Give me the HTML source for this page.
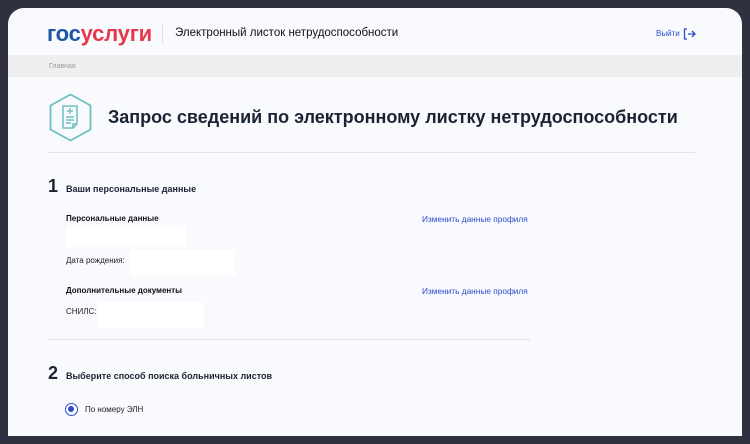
<!DOCTYPE html>
<html><head><meta charset="utf-8"><style>
*{margin:0;padding:0;box-sizing:border-box}
body{width:750px;height:444px;background:#2f3040;font-family:"Liberation Sans",sans-serif;overflow:hidden;position:relative}
.page{position:absolute;left:8px;top:8px;width:734px;height:428px;background:#f9fafd;border-radius:16px 16px 0 0;overflow:hidden}
.a{position:absolute;white-space:nowrap;line-height:1}
.w{position:absolute;background:#fff}
</style></head><body>
<div class="page">
<div class="a" style="left:39px;top:15px;font-size:22px;font-weight:bold;letter-spacing:-0.2px"><span style="color:#1e55a5">гос</span><span style="color:#e5384d">услуги</span></div>
<div class="w" style="left:154px;top:17px;width:1px;height:18px;background:#ddd"></div>
<div class="a" style="left:167px;top:20px;font-size:11.5px;color:#111">Электронный листок нетрудоспособности</div>
<div class="a" style="left:648px;top:22px;font-size:8px;color:#2a4bc8">Выйти</div>
<svg class="a" style="left:675px;top:20px" width="13" height="12" viewBox="0 0 13 12"><path d="M4 1H1.5V11H4M5 6H12M9 3L12 6L9 9" fill="none" stroke="#2a4bc8" stroke-width="1.3"/></svg>
<div class="w" style="left:0;top:47px;width:734px;height:22px;background:#eeefee"></div>
<div class="a" style="left:41px;top:55px;font-size:7px;color:#999">Главная</div>
<svg class="a" style="left:40px;top:85px" width="45" height="49" viewBox="0 0 45 49"><path d="M22.5 1.5L42.5 12.5V36.5L22.5 47.5L2.5 36.5V12.5Z" fill="none" stroke="#6bbfbf" stroke-width="1.8" stroke-linejoin="round"/><path d="M15 13H29V31L25 35H15Z M25 35V31H29" fill="none" stroke="#6bbfbf" stroke-width="1.5"/><path d="M22 15V21M19 18H25M18 24H26M18 27H26M18 30H23" stroke="#6bbfbf" stroke-width="1.4"/></svg>
<div class="a" style="left:100px;top:100px;font-size:18px;font-weight:bold;color:#1a2333">Запрос сведений по электронному листку нетрудоспособности</div>
<div class="w" style="left:40px;top:144px;width:647px;height:1px;background:#e3e5ea"></div>
<div class="a" style="left:40px;top:169px;font-size:18px;font-weight:bold;color:#1a2333">1</div>
<div class="a" style="left:58px;top:177px;font-size:9px;font-weight:bold;color:#1a2333">Ваши персональные данные</div>
<div class="a" style="left:58px;top:207px;font-size:8px;font-weight:bold;color:#111">Персональные данные</div>
<div class="a" style="left:414px;top:207px;font-size:8.3px;color:#2a4bc8">Изменить данные профиля</div>
<div class="w" style="left:58px;top:219px;width:120px;height:20px"></div>
<div class="a" style="left:58px;top:249px;font-size:8px;color:#222">Дата рождения:</div>
<div class="w" style="left:122px;top:242px;width:105px;height:26px"></div>
<div class="a" style="left:58px;top:279px;font-size:8px;font-weight:bold;color:#111">Дополнительные документы</div>
<div class="a" style="left:414px;top:279px;font-size:8.3px;color:#2a4bc8">Изменить данные профиля</div>
<div class="a" style="left:58px;top:300px;font-size:8px;color:#222">СНИЛС:</div>
<div class="w" style="left:91px;top:294px;width:105px;height:26px"></div>
<div class="w" style="left:40px;top:331px;width:482px;height:1px;background:#dfe1e6"></div>
<div class="a" style="left:40px;top:356px;font-size:18px;font-weight:bold;color:#1a2333">2</div>
<div class="a" style="left:58px;top:364px;font-size:9px;font-weight:bold;color:#1a2333">Выберите способ поиска больничных листов</div>
<div class="a" style="left:57px;top:395px;width:13px;height:13px;border:1.5px solid #2a4bc8;border-radius:50%;background:#fff"><div style="position:absolute;left:2px;top:2px;width:6px;height:6px;border-radius:50%;background:#2a4bc8"></div></div>
<div class="a" style="left:77px;top:398px;font-size:8px;color:#222">По номеру ЭЛН</div>
</div>
</body></html>
